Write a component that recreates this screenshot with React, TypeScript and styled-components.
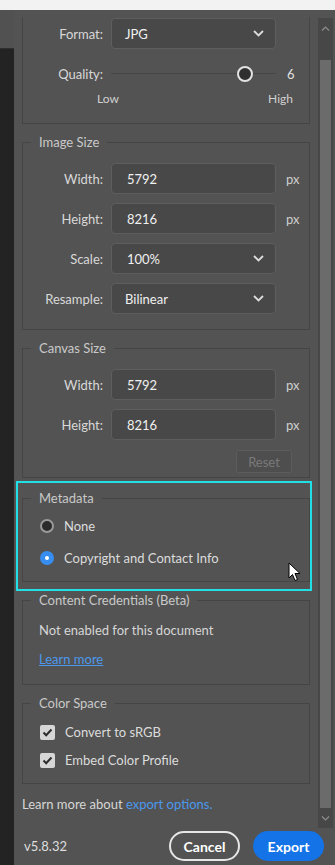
import React from "react";
import styled, { createGlobalStyle } from "styled-components";

const Global = createGlobalStyle`
  html, body { margin: 0; padding: 0; background: #535353; }
  body { font-family: Lato, "Open Sans", sans-serif; color: #d8d8d8; }
  * { box-sizing: border-box; }
`;

const Page = styled.div`
  width: 335px;
  height: 865px;
  display: flex;
  flex-direction: column;
  background: #535353;
  overflow: hidden;
`;

const TopStrip = styled.div`
  height: 10px;
  flex: none;
  background: #f2f2f2;
`;

const Body = styled.div`
  flex: 1;
  display: flex;
  min-height: 0;
`;

const LeftStrip = styled.div`
  width: 14px;
  flex: none;
  display: flex;
  flex-direction: column;
`;

const LeftTop = styled.div`
  height: 38px;
  background: #515151;
`;

const LeftDark = styled.div`
  flex: 1;
  background: #232323;
  border-top: 1px solid #2f2f2f;
`;

const Pane = styled.div`
  flex: 1;
  display: flex;
  flex-direction: column;
  min-width: 0;
`;

const ScrollArea = styled.div`
  height: 818px;
  flex: none;
  display: flex;
  position: relative;
`;

const Content = styled.div`
  width: 304px;
  padding: 7px 8px 0 8px;
  display: flex;
  flex-direction: column;
  overflow: hidden;
`;

const Scrollbar = styled.div`
  width: 17px;
  margin-top: 8px;
  display: flex;
  flex-direction: column;
  align-items: flex-start;
`;

const Track = styled.div`
  width: 15px;
  flex: 1;
  background: #474747;
  display: flex;
  flex-direction: column;
  align-items: center;
`;

const ArrowBox = styled.div`
  height: 20px;
  width: 15px;
  display: flex;
  align-items: center;
  justify-content: center;
  flex: none;
`;

const Thumb = styled.div`
  width: 11px;
  flex: 1;
  margin: 22px 0 0 0;
  background: #6b6b6b;
`;

const Group = styled.fieldset<{ $noTop?: boolean; $mt?: number; $pt?: number; $pb?: number }>`
  margin: ${(p) => p.$mt ?? 0}px 0 0 0;
  min-width: 0;
  border: 1px solid #454545;
  border-top: ${(p) => (p.$noTop ? "none" : "1px solid #454545")};
  padding: ${(p) => p.$pt ?? 0}px 0 ${(p) => p.$pb ?? 0}px 0;
  display: flex;
  flex-direction: column;
`;

const Legend = styled.legend`
  margin-left: 8px;
  padding: 0 8px;
  font-size: 13px;
  line-height: 16px;
  color: #c9c9c9;
`;

const Row = styled.div<{ $mt?: number }>`
  display: grid;
  grid-template-columns: 80px 165px auto;
  column-gap: 8px;
  align-items: center;
  height: 31px;
  margin-top: ${(p) => p.$mt ?? 0}px;
`;

const Label = styled.div`
  text-align: right;
  font-size: 13px;
  color: #d8d8d8;
`;

const Unit = styled.div`
  font-size: 13px;
  color: #cfcfcf;
  padding-left: 2px;
`;

const Field = styled.div<{ $pl?: number }>`
  height: 31px;
  background: #484848;
  border: 1px solid #5e5e5e;
  border-radius: 4px;
  display: flex;
  align-items: center;
  justify-content: space-between;
  padding: 0 11px 0 ${(p) => p.$pl ?? 15}px;
  font-size: 13px;
  color: #f0f0f0;
`;

const SliderTrack = styled.div`
  height: 16px;
  display: flex;
  align-items: center;
  position: relative;
`;

const SliderLine = styled.div`
  flex: 1;
  height: 1px;
  background: #464646;
`;

const SliderThumb = styled.div`
  position: absolute;
  left: 126px;
  top: 0;
  width: 16px;
  height: 16px;
  border-radius: 50%;
  border: 2px solid #e2e2e2;
  background: #2f2f2f;
`;

const Value = styled.div`
  font-size: 13px;
  color: #e0e0e0;
  padding-left: 3px;
`;

const ScaleLabels = styled.div`
  display: flex;
  justify-content: space-between;
  margin: 2px 0 0 74px;
  width: 196px;
  font-size: 12px;
  line-height: 16px;
  color: #d0d0d0;
`;

const ResetRow = styled.div`
  display: flex;
  justify-content: flex-end;
  padding-right: 17px;
  margin-top: 10px;
`;

const ResetButton = styled.div`
  width: 56px;
  height: 23px;
  border: 1px solid #5c5c5c;
  border-radius: 3px;
  background: #4e4e4e;
  color: #7a7a7a;
  font-size: 13px;
  display: flex;
  align-items: center;
  justify-content: center;
`;

const Highlight = styled.div`
  margin: 3px -2px 0 -6px;
  border: 2px solid #21dfe6;
  padding: 7px 0 7px 4px;
`;

const OptionRow = styled.div<{ $mt?: number }>`
  display: flex;
  align-items: center;
  gap: 10px;
  height: 20px;
  padding-left: 17px;
  margin-top: ${(p) => p.$mt ?? 0}px;
  font-size: 13px;
  color: #dcdcdc;
`;

const Radio = styled.div<{ $on?: boolean }>`
  width: 14px;
  height: 14px;
  border-radius: 50%;
  flex: none;
  display: flex;
  align-items: center;
  justify-content: center;
  background: ${(p) => (p.$on ? "#378ef0" : "#2b2b2b")};
  border: 2px solid ${(p) => (p.$on ? "#378ef0" : "#9a9a9a")};
`;

const RadioDot = styled.div`
  width: 4px;
  height: 4px;
  border-radius: 50%;
  background: #ffffff;
`;

const Check = styled.div`
  width: 15px;
  height: 15px;
  flex: none;
  border-radius: 2px;
  background: #d6d6d6;
  display: flex;
  align-items: center;
  justify-content: center;
`;

const TextLine = styled.div<{ $mt?: number }>`
  height: 20px;
  line-height: 20px;
  padding-left: 16px;
  margin-top: ${(p) => p.$mt ?? 0}px;
  font-size: 13px;
  color: #d6d6d6;
`;

const Link = styled.span`
  color: #4b98ec;
`;

const ULink = styled(Link)`
  text-decoration: underline;
`;

const AboutLine = styled.div`
  margin-top: 10px;
  height: 20px;
  line-height: 20px;
  font-size: 13px;
  color: #d6d6d6;
`;

const Footer = styled.div`
  flex: 1;
  display: flex;
  align-items: flex-start;
  padding: 3px 11px 0 10px;
`;

const Version = styled.div`
  flex: 1;
  font-size: 13px;
  line-height: 30px;
  color: #dedede;
`;

const Button = styled.div<{ $primary?: boolean }>`
  width: 71px;
  height: 30px;
  border-radius: 15px;
  display: flex;
  align-items: center;
  justify-content: center;
  font-size: 14px;
  font-weight: 700;
  color: #ffffff;
  background: ${(p) => (p.$primary ? "#1473e6" : "transparent")};
  border: 2px solid ${(p) => (p.$primary ? "#1473e6" : "#e6e6e6")};
  & + & {
    margin-left: 13px;
  }
`;

const Cursor = styled.svg`
  position: absolute;
  left: 274px;
  top: 552px;
`;

const Chevron = () => (
  <svg width="11" height="7" viewBox="0 0 11 7">
    <path d="M1 1 L5.5 5.5 L10 1" fill="none" stroke="#dcdcdc" strokeWidth="1.8" />
  </svg>
);

const SmallArrow = ({ up }: { up?: boolean }) => (
  <svg width="9" height="5" viewBox="0 0 9 5">
    <path d={up ? "M1 4.5 L4.5 1 L8 4.5" : "M1 0.5 L4.5 4 L8 0.5"} fill="none" stroke="#8c8c8c" strokeWidth="1.2" />
  </svg>
);

const Tick = () => (
  <svg width="11" height="9" viewBox="0 0 11 9">
    <path d="M1.5 4.5 L4.2 7.2 L9.5 1.5" fill="none" stroke="#2c2c2c" strokeWidth="2" />
  </svg>
);

export default function App() {
  return (
    <Page>
      <Global />
      <TopStrip />
      <Body>
        <LeftStrip>
          <LeftTop />
          <LeftDark />
        </LeftStrip>
        <Pane>
          <ScrollArea>
            <Content>
              <Group $noTop $pt={1} $pb={16}>
                <Row>
                  <Label>Format:</Label>
                  <Field $pl={13}>
                    JPG <Chevron />
                  </Field>
                </Row>
                <Row $mt={9}>
                  <Label>Quality:</Label>
                  <SliderTrack>
                    <SliderLine />
                    <SliderThumb />
                  </SliderTrack>
                  <Value>6</Value>
                </Row>
                <ScaleLabels>
                  <span>Low</span>
                  <span>High</span>
                </ScaleLabels>
              </Group>

              <Group $mt={10} $pt={13} $pb={15}>
                <Legend>Image Size</Legend>
                <Row>
                  <Label>Width:</Label>
                  <Field>5792</Field>
                  <Unit>px</Unit>
                </Row>
                <Row $mt={9}>
                  <Label>Height:</Label>
                  <Field>8216</Field>
                  <Unit>px</Unit>
                </Row>
                <Row $mt={9}>
                  <Label>Scale:</Label>
                  <Field>
                    100% <Chevron />
                  </Field>
                </Row>
                <Row $mt={9}>
                  <Label>Resample:</Label>
                  <Field $pl={13}>
                    Bilinear <Chevron />
                  </Field>
                </Row>
              </Group>

              <Group $mt={10} $pt={13} $pb={4}>
                <Legend>Canvas Size</Legend>
                <Row>
                  <Label>Width:</Label>
                  <Field>5792</Field>
                  <Unit>px</Unit>
                </Row>
                <Row $mt={9}>
                  <Label>Height:</Label>
                  <Field>8216</Field>
                  <Unit>px</Unit>
                </Row>
                <ResetRow>
                  <ResetButton>Reset</ResetButton>
                </ResetRow>
              </Group>

              <Highlight>
                <Group $pt={10} $pb={13}>
                  <Legend>Metadata</Legend>
                  <OptionRow>
                    <Radio />
                    None
                  </OptionRow>
                  <OptionRow $mt={12}>
                    <Radio $on>
                      <RadioDot />
                    </Radio>
                    Copyright and Contact Info
                  </OptionRow>
                </Group>
              </Highlight>

              <Group $mt={1} $pt={12} $pb={15}>
                <Legend>Content Credentials (Beta)</Legend>
                <TextLine>Not enabled for this document</TextLine>
                <TextLine $mt={9}>
                  <ULink>Learn more</ULink>
                </TextLine>
              </Group>

              <Group $mt={10} $pt={11} $pb={13}>
                <Legend>Color Space</Legend>
                <OptionRow>
                  <Check>
                    <Tick />
                  </Check>
                  Convert to sRGB
                </OptionRow>
                <OptionRow $mt={8}>
                  <Check>
                    <Tick />
                  </Check>
                  Embed Color Profile
                </OptionRow>
              </Group>

              <AboutLine>
                Learn more about <Link>export options.</Link>
              </AboutLine>
            </Content>
            <Scrollbar>
              <Track>
                <ArrowBox>
                  <SmallArrow up />
                </ArrowBox>
                <Thumb />
                <ArrowBox>
                  <SmallArrow />
                </ArrowBox>
              </Track>
            </Scrollbar>
            <Cursor width="13" height="20" viewBox="0 0 13 20">
              <path d="M1 1 L1 16 L4.5 12.5 L7 18.5 L9.5 17.5 L7 11.5 L12 11.5 Z" fill="#ffffff" stroke="#000000" strokeWidth="1" strokeLinejoin="round" />
            </Cursor>
          </ScrollArea>
          <Footer>
            <Version>v5.8.32</Version>
            <Button>Cancel</Button>
            <Button $primary>Export</Button>
          </Footer>
        </Pane>
      </Body>
    </Page>
  );
}
